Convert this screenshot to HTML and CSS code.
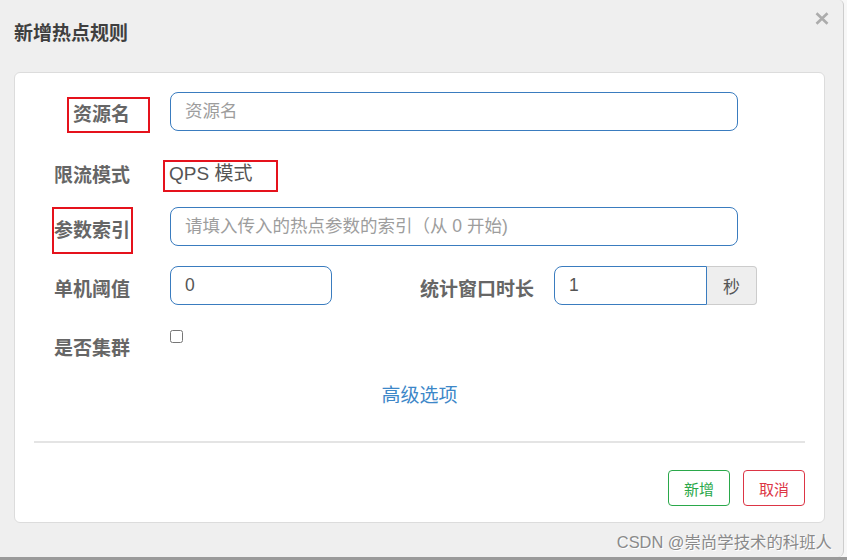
FILE: index.html
```html
<!DOCTYPE html>
<html lang="zh-CN">
<head>
<meta charset="utf-8">
<title>新增热点规则</title>
<link rel="stylesheet" href="styles.css">
</head>
<body>
<div class="screen">
  <div class="dialog">
    <div class="dialog-header">
      <h4 class="dialog-title">新增热点规则</h4>
      <button class="close" type="button" aria-label="关闭">
        <svg width="14" height="13" viewBox="0 0 14 13"><path d="M1.5 1.2 L12.5 11.8 M12.5 1.2 L1.5 11.8" stroke="#acacac" stroke-width="2.6" stroke-linecap="butt"/></svg>
      </button>
    </div>
    <div class="card">
      <div class="row row-1">
        <label class="label">资源名</label>
        <input class="input input-wide" type="text" placeholder="资源名">
      </div>
      <div class="row row-2">
        <label class="label">限流模式</label>
        <span class="static">QPS 模式</span>
      </div>
      <div class="row row-3">
        <label class="label">参数索引</label>
        <input class="input input-wide" type="text" placeholder="请填入传入的热点参数的索引（从 0 开始)">
      </div>
      <div class="row row-4">
        <label class="label">单机阈值</label>
        <input class="input input-short" type="text" value="0">
        <label class="label label-inline">统计窗口时长</label>
        <div class="group">
          <input class="input input-group-field" type="text" value="1">
          <span class="addon">秒</span>
        </div>
      </div>
      <div class="row row-5">
        <label class="label">是否集群</label>
        <input class="check" type="checkbox">
      </div>
      <div class="advanced"><a href="#" class="link">高级选项</a></div>
      <hr class="divider">
      <div class="footer">
        <button class="btn btn-add" type="button">新增</button>
        <button class="btn btn-cancel" type="button">取消</button>
      </div>
      <span class="mark mark-1"></span>
      <span class="mark mark-2"></span>
      <span class="mark mark-3"></span>
    </div>
    <div class="watermark">CSDN @崇尚学技术的科班人</div>
  </div>
  <div class="bottom-bar"></div>
</div>
</body>
</html>
```

FILE: styles.css
```css
* { box-sizing: border-box; }

html, body {
  margin: 0;
  padding: 0;
  background: #f7f7f7;
  font-family: "Liberation Sans", "Noto Sans CJK SC", sans-serif;
}

.screen {
  width: 847px;
  height: 560px;
  display: flex;
  flex-direction: column;
  background: #f7f7f7;
}

.dialog {
  width: 844px;
  height: 557px;
  background: #efefef;
  border-right: 1px solid #cdcdcd;
  border-radius: 0 5px 6px 0;
  display: flex;
  flex-direction: column;
}

.bottom-bar {
  flex: 1;
  background: #9a9a9a;
}

.dialog-header {
  display: flex;
  justify-content: space-between;
  align-items: flex-start;
  padding: 12px 14px 0 14px;
  height: 44px;
}

.dialog-title {
  margin: 8px 0 0 0;
  font-family: "Noto Sans CJK SC", sans-serif;
  font-size: 19px;
  line-height: 24px;
  font-weight: bold;
  color: #3f3f3f;
}

.close {
  border: 0;
  background: transparent;
  padding: 0;
  margin: 0;
  width: 14px;
  height: 13px;
  display: block;
}
.close svg { display: block; }

.card {
  position: relative;
  margin: 28px 18px 0 14px;
  height: 451px;
  background: #fff;
  border: 1px solid #dcdcdc;
  border-radius: 6px;
  padding: 19px 0 0 0;
  display: flex;
  flex-direction: column;
}

.row {
  display: flex;
  align-items: center;
  height: 39px;
}
.row-2 { margin-top: 24px; }
.row-3 { margin-top: 13px; }
.row-4 { margin-top: 20px; }
.row-5 { margin-top: 21px; align-items: flex-start; }

.label {
  width: 115px;
  flex: none;
  text-align: right;
  margin-right: 40px;
  padding-top: 4px;
  font-family: "Noto Sans CJK SC", sans-serif;
  font-weight: bold;
  font-size: 19px;
  line-height: 26px;
  color: #666;
}
.row-1 .label { padding-top: 2px; }
.row-2 .label { padding-top: 0; margin-top: -2px; }
.row-5 .label { padding-top: 8px; }

.label-inline {
  width: auto;
  margin-left: 88px;
  margin-right: 19px;
}

.static {
  font-size: 19px;
  line-height: 26px;
  color: #555;
  margin-top: -2px;
  margin-left: -1px;
}

.input {
  height: 39px;
  border: 1px solid #3a7cbf;
  border-radius: 8px;
  padding: 0 14px;
  font-family: "Liberation Sans", "Noto Sans CJK SC", sans-serif;
  font-size: 17.5px;
  color: #555;
  background: #fff;
  outline: none;
}
.input::placeholder { color: #9d9d9d; }

.input-wide { width: 568px; }
.input-short { width: 162px; }

.group {
  display: flex;
  height: 39px;
  margin-left: 1px;
}
.input-group-field {
  width: 153px;
  border-radius: 8px 0 0 8px;
}
.addon {
  width: 50px;
  height: 39px;
  display: flex;
  align-items: center;
  justify-content: center;
  background: #eee;
  border: 1px solid #ccc;
  border-left: 0;
  border-radius: 0 4px 4px 0;
  font-family: "Noto Sans CJK SC", sans-serif;
  font-size: 17px;
  color: #555;
}

.check {
  width: 13px;
  height: 13px;
  margin: 4px 0 0 0;
}

.advanced {
  margin-top: 16px;
  text-align: center;
  line-height: 26px;
}
.link {
  font-family: "Noto Sans CJK SC", sans-serif;
  font-size: 19px;
  color: #3d87c8;
  text-decoration: none;
}

.divider {
  margin: 31px 19px 0 19px;
  border: 0;
  height: 2px;
  background: #e4e4e4;
}

.footer {
  margin-top: 27px;
  padding-right: 19px;
  display: flex;
  justify-content: flex-end;
  gap: 13px;
}

.btn {
  width: 62px;
  height: 36px;
  background: #fff;
  border: 1px solid;
  border-radius: 4px;
  font-family: "Noto Sans CJK SC", sans-serif;
  font-size: 15px;
  padding: 0;
}
.btn-add { color: #2aa84a; border-color: #2aa84a; }
.btn-cancel { color: #dc3545; border-color: #dc3545; }

.mark {
  position: absolute;
  border: 2px solid #e5121c;
}
.mark-1 { left: 52px; top: 24px; width: 83px; height: 36px; }
.mark-2 { left: 148px; top: 87px; width: 115px; height: 32px; }
.mark-3 { left: 37px; top: 134px; width: 81px; height: 47px; }

.watermark {
  margin-top: 10px;
  padding-right: 11px;
  text-align: right;
  font-family: "Liberation Sans", "Noto Sans CJK SC", sans-serif;
  font-size: 16.4px;
  line-height: 18px;
  color: #8a8a8a;
  text-shadow: 1px 1px 0 #fff;
}
```
